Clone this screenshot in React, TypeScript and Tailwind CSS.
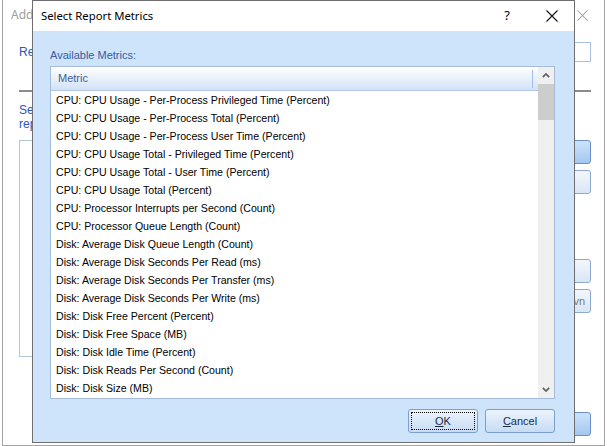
const metrics = [
  'CPU: CPU Usage - Per-Process Privileged Time (Percent)',
  'CPU: CPU Usage - Per-Process Total (Percent)',
  'CPU: CPU Usage - Per-Process User Time (Percent)',
  'CPU: CPU Usage Total - Privileged Time (Percent)',
  'CPU: CPU Usage Total - User Time (Percent)',
  'CPU: CPU Usage Total (Percent)',
  'CPU: Processor Interrupts per Second (Count)',
  'CPU: Processor Queue Length (Count)',
  'Disk: Average Disk Queue Length (Count)',
  'Disk: Average Disk Seconds Per Read (ms)',
  'Disk: Average Disk Seconds Per Transfer (ms)',
  'Disk: Average Disk Seconds Per Write (ms)',
  'Disk: Disk Free Percent (Percent)',
  'Disk: Disk Free Space (MB)',
  'Disk: Disk Idle Time (Percent)',
  'Disk: Disk Reads Per Second (Count)',
  'Disk: Disk Size (MB)',
]

function CloseIcon({ color, size }: { color: string; size: number }) {
  return (
    <svg width={size} height={size} viewBox="0 0 12 12">
      <path d="M0.5 0.5 L11.5 11.5 M11.5 0.5 L0.5 11.5" stroke={color} strokeWidth="1.1" fill="none" />
    </svg>
  )
}

function Chevron({ down }: { down?: boolean }) {
  return (
    <svg width="8" height="5" viewBox="0 0 8 5">
      <path
        d={down ? 'M0.8 0.8 L4 4 L7.2 0.8' : 'M0.8 4.2 L4 1 L7.2 4.2'}
        fill="none"
        stroke="#606060"
        strokeWidth="1.7"
      />
    </svg>
  )
}

function BgButton({ blue, children }: { blue?: boolean; children?: React.ReactNode }) {
  return (
    <div
      className={
        blue
          ? 'w-[64px] h-[24px] rounded-[3px] border border-[#6c8ec2] bg-linear-to-b from-[#cde3fb] to-[#a3c7f0] flex items-center justify-end pr-[5px] text-[11px] text-[#7a7a7a]'
          : 'w-[64px] h-[24px] rounded-[3px] border border-[#8ca8cf] bg-linear-to-b from-[#f3f7fc] to-[#d9e6f5] flex items-center justify-end pr-[5px] text-[11px] text-[#7a7a7a]'
      }
    >
      {children}
    </div>
  )
}

export default function App() {
  return (
    <div className="relative w-[607px] h-[446px] overflow-hidden bg-white [font-family:'Liberation_Sans',Arial,sans-serif]">
      {/* Window behind the dialog (only its edges show) */}
      <div className="ml-[2px] w-[603px] h-[446px] border-x border-b border-[#a3a3a3] flex flex-col">
        <div className="h-[30px] flex items-center justify-between pl-[8px] pr-[16px]">
          <span className="text-[12px] text-[#a0a0a0] [font-family:'Noto_Sans',sans-serif]">Add</span>
          <CloseIcon color="#a8a8a8" size={11} />
        </div>
        <div className="flex-1 flex flex-col pl-[16px] pr-[13px]">
          <div className="mt-[12px] h-[20px] flex items-center">
            <span className="text-[12px] text-[#2a55c4]">Re</span>
            <div className="flex-1" />
            <div className="w-[80px] h-[20px] border border-[#a9c1e0] bg-white" />
          </div>
          <div className="mt-[28px] h-[2px] bg-[#8b8b8b]" />
          <div className="mt-[11px] text-[12px] leading-[14px] text-[#2a55c4]">
            <div>Se</div>
            <div>rep</div>
          </div>
          <div className="mt-[9px] flex">
            <div className="flex-1 h-[217px] border border-[#b3c7e0] bg-white" />
            <div className="ml-[8px] flex flex-col">
              <BgButton blue />
              <div className="mt-[6px]">
                <BgButton />
              </div>
              <div className="mt-[65px]">
                <BgButton />
              </div>
              <div className="mt-[6px]">
                <BgButton>vn</BgButton>
              </div>
            </div>
          </div>
          <div className="mt-auto mb-[9px] flex justify-end">
            <BgButton blue />
          </div>
        </div>
      </div>

      {/* Select Report Metrics dialog */}
      <div className="absolute left-[32px] top-0 w-[543px] h-[443px] border border-[#6f6f6f] bg-[#cde4fa] flex flex-col">
        <div className="h-[30px] bg-white flex items-center pl-[8px] pr-[16px]">
          <span className="text-[11.3px] text-black [font-family:'Noto_Sans',sans-serif]">Select Report Metrics</span>
          <span className="ml-auto w-[12px] text-center text-[13px] text-black [font-family:'Noto_Sans',sans-serif]">?</span>
          <div className="ml-[33px]">
            <CloseIcon color="#111111" size={12} />
          </div>
        </div>
        <div className="flex-1 flex flex-col pl-[17px] pr-[19px]">
          <div className="mt-[18px] text-[11px] leading-[13px] text-[#3a5aa2]">Available Metrics:</div>
          <div className="mt-[4px] h-[333px] border border-[#a5bcd9] bg-white flex overflow-hidden">
            <div className="flex-1 flex flex-col overflow-hidden">
              <div className="h-[24px] shrink-0 border-b border-[#b0c6e2] bg-linear-to-b from-white to-[#d2e2f6] flex items-center">
                <span className="flex-1 pl-[7px] text-[11px] text-[#3b5d96]">Metric</span>
                <div className="w-px h-[18px] bg-[#9fbfe8] mr-[5px]" />
              </div>
              {metrics.map(m => (
                <div key={m} className="h-[18px] shrink-0 leading-[19px] pl-[5px] text-[10.6px] text-black whitespace-nowrap">
                  {m}
                </div>
              ))}
            </div>
            <div className="w-[16px] bg-[#f0f0f0] flex flex-col">
              <div className="h-[17px] flex items-center justify-center">
                <Chevron />
              </div>
              <div className="h-[36px] bg-[#cdcdcd]" />
              <div className="flex-1" />
              <div className="h-[17px] flex items-center justify-center">
                <Chevron down />
              </div>
            </div>
          </div>
          <div className="mt-[10px] flex justify-end gap-[7px]">
            <div className="relative w-[70px] h-[24px] rounded-[3px] border border-[#7e9ecb] bg-linear-to-b from-[#ecf4fd] to-[#c6dcf4] flex items-center justify-center text-[11px] text-[#1c2b45]">
              <div className="absolute inset-[2px] border border-dotted border-black" />
              <span>
                <span className="underline">O</span>K
              </span>
            </div>
            <div className="w-[70px] h-[24px] rounded-[3px] border border-[#7e9ecb] bg-linear-to-b from-[#ecf4fd] to-[#c6dcf4] flex items-center justify-center text-[11px] text-[#1c2b45]">
              <span>
                <span className="underline">C</span>ancel
              </span>
            </div>
          </div>
        </div>
      </div>
    </div>
  )
}
